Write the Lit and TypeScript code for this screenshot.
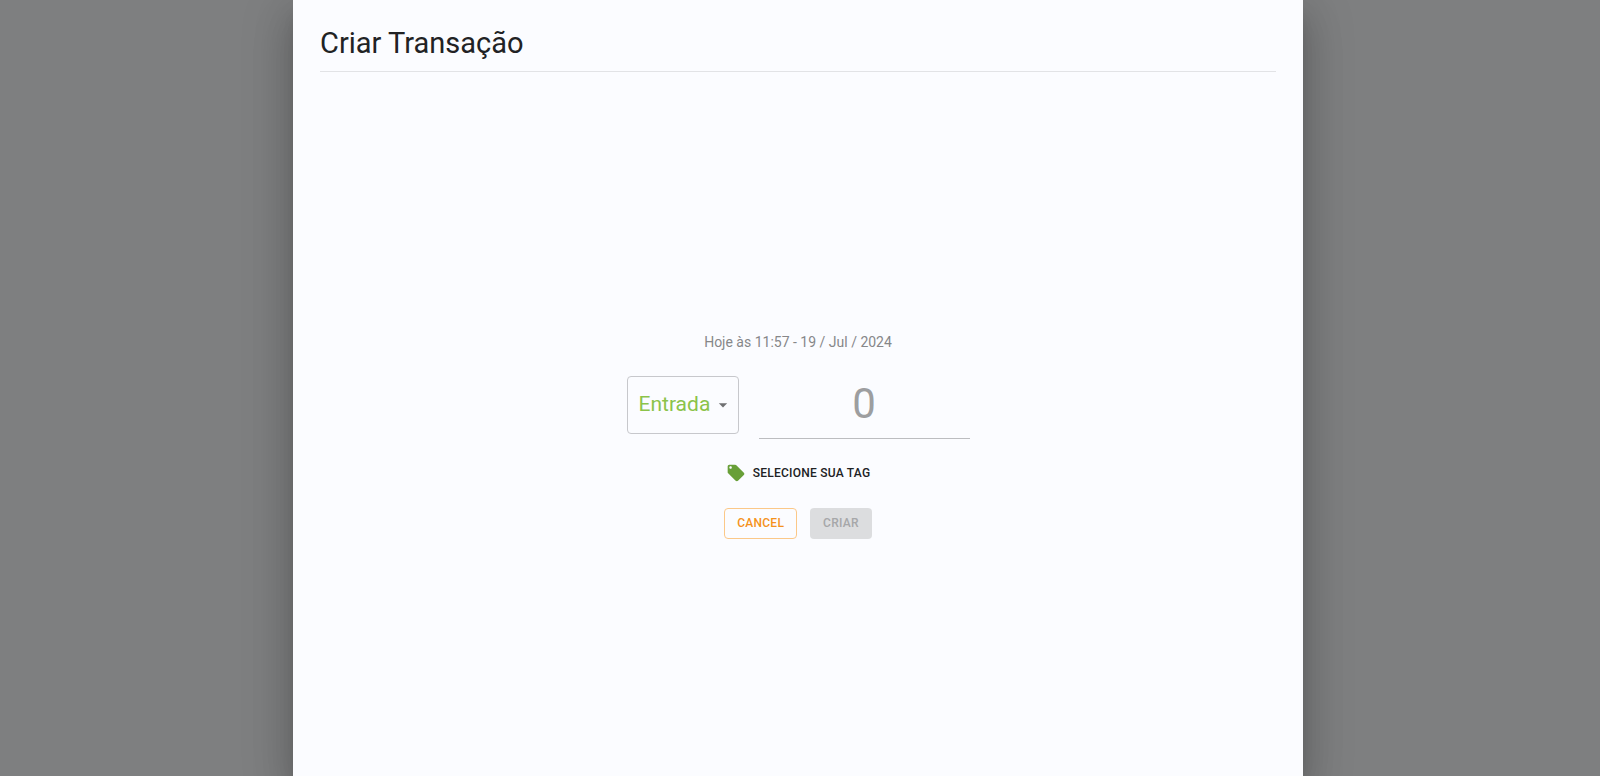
import { LitElement, html, css } from "lit";
import { customElement, state } from "lit/decorators.js";

@customElement("app-root")
export class AppRoot extends LitElement {
  @state() private kind = "in";
  @state() private amount = "";

  static styles = css`
    :host {
      display: block;
      font-family: Roboto, "Noto Sans", sans-serif;
      color: #212224;
    }
    * {
      box-sizing: border-box;
    }
    .backdrop {
      display: flex;
      justify-content: center;
      min-height: 100vh;
      padding-right: 4px;
      overflow: hidden;
      background: #7e7f80;
    }
    .dialog {
      display: flex;
      flex-direction: column;
      width: 100%;
      max-width: 1010px;
      padding: 25px 27px 24px;
      background: #fbfcff;
      box-shadow:
        0 11px 15px -7px rgba(0, 0, 0, 0.2),
        0 24px 38px 3px rgba(0, 0, 0, 0.14),
        0 9px 46px 8px rgba(0, 0, 0, 0.12);
    }
    .title {
      margin: 0;
      padding-bottom: 10px;
      border-bottom: 1px solid #e2e3e6;
      font-size: 29px;
      font-weight: 400;
      line-height: 36px;
    }
    .form {
      flex: 1;
      display: flex;
      flex-direction: column;
      align-items: center;
      justify-content: center;
      padding-top: 46px;
    }
    .date {
      margin: 0 0 24px;
      font-size: 14px;
      line-height: 20px;
      color: #868789;
    }
    .values {
      display: flex;
      align-items: flex-start;
      gap: 20px;
    }
    .select {
      display: grid;
      align-items: center;
    }
    .select > * {
      grid-area: 1 / 1;
    }
    .kind {
      appearance: none;
      width: 112px;
      height: 58px;
      padding: 0 24px 2px 11px;
      border: 1px solid #c7c8cc;
      border-radius: 4px;
      background: transparent;
      font: inherit;
      font-size: 21px;
      color: #8bc34a;
    }
    .arrow {
      justify-self: end;
      width: 20px;
      height: 20px;
      margin-right: 6px;
      fill: #6f7072;
      pointer-events: none;
    }
    .amount {
      width: 211px;
      height: 63px;
      padding: 0 0 6px;
      border: 0;
      border-bottom: 1px solid #bcbdc0;
      border-radius: 0;
      background: transparent;
      font: inherit;
      font-size: 42px;
      text-align: center;
      color: inherit;
    }
    .amount::placeholder {
      color: #9d9ea0;
      opacity: 1;
    }
    button {
      display: flex;
      align-items: center;
      justify-content: center;
      height: 31px;
      padding: 0 12px;
      border: 1px solid transparent;
      border-radius: 4px;
      background: transparent;
      font: inherit;
      font-size: 12px;
      font-weight: 500;
      letter-spacing: 0.02em;
      text-transform: uppercase;
      color: inherit;
    }
    .tag {
      gap: 7px;
      margin: 19px 0;
    }
    .tag svg {
      width: 20px;
      height: 20px;
      fill: #689f38;
    }
    .actions {
      display: flex;
      gap: 13px;
    }
    .cancel {
      border-color: #fbc888;
      color: #f5921b;
    }
    .create:disabled {
      background: #dcdddf;
      color: #a6a7a9;
    }
  `;

  render() {
    return html`
      <div class="backdrop">
        <main class="dialog" role="dialog" aria-labelledby="title">
          <h1 class="title" id="title">Criar Transação</h1>
          <form class="form" @submit=${(e: Event) => e.preventDefault()}>
            <p class="date">Hoje às 11:57 - 19 / Jul / 2024</p>
            <div class="values">
              <div class="select">
                <select
                  class="kind"
                  aria-label="Tipo"
                  .value=${this.kind}
                  @change=${(e: Event) => (this.kind = (e.target as HTMLSelectElement).value)}
                >
                  <option value="in">Entrada</option>
                </select>
                <svg class="arrow" viewBox="0 0 24 24" aria-hidden="true">
                  <path d="M7 10l5 5 5-5z" />
                </svg>
              </div>
              <input
                class="amount"
                aria-label="Valor"
                inputmode="decimal"
                placeholder="0"
                .value=${this.amount}
                @input=${(e: Event) => (this.amount = (e.target as HTMLInputElement).value)}
              />
            </div>
            <button class="tag" type="button">
              <svg viewBox="0 0 24 24" aria-hidden="true">
                <path
                  d="M21.41 11.58l-9-9C12.05 2.22 11.55 2 11 2H4c-1.1 0-2 .9-2 2v7c0 .55.22 1.05.59 1.42l9 9c.36.36.86.58 1.41.58.55 0 1.05-.22 1.41-.59l7-7c.37-.36.59-.86.59-1.41 0-.55-.23-1.06-.59-1.42zM5.5 7C4.67 7 4 6.33 4 5.5S4.67 4 5.5 4 7 4.67 7 5.5 6.33 7 5.5 7z"
                />
              </svg>
              Selecione sua tag
            </button>
            <div class="actions">
              <button class="cancel" type="button">Cancel</button>
              <button class="create" type="submit" ?disabled=${this.amount === ""}>Criar</button>
            </div>
          </form>
        </main>
      </div>
    `;
  }
}
